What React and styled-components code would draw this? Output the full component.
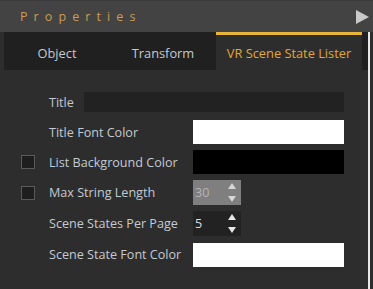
import React from "react";
import styled, { createGlobalStyle } from "styled-components";

const Global = createGlobalStyle`
  html, body { margin: 0; padding: 0; background: #2d2d2d; overflow: hidden; }
  body { font-family: "Open Sans", "Noto Sans", sans-serif; }
  #root { width: 373px; height: 289px; }
`;

const Frame = styled.div`
  width: 373px;
  height: 289px;
  display: flex;
  flex-direction: column;
  background: #2d2d2d;
`;

const Header = styled.div`
  height: 32px;
  flex: none;
  box-sizing: border-box;
  background: #434343;
  border-top: 1px solid #3a3a3a;
  display: flex;
  align-items: center;
  justify-content: space-between;
  padding: 0 4px 0 20px;
`;

const HeaderTitle = styled.div`
  color: #c99d55;
  font-size: 12.5px;
  letter-spacing: 6.1px;
  line-height: 1;
  margin-top: 2px;
`;

const PlayIcon = styled.svg`
  width: 13px;
  height: 14px;
  display: block;
`;

const Body = styled.div`
  flex: 1;
  display: flex;
`;

const Main = styled.div`
  width: 368px;
  display: flex;
  flex-direction: column;
`;

const ScrollEdge = styled.div`
  width: 2px;
  background: #e8e8e8;
`;

const TabBar = styled.div`
  height: 38px;
  margin-left: 4px;
  background: #202020;
  display: flex;
`;

const Tab = styled.div`
  box-sizing: border-box;
  width: ${(p) => p.$w}px;
  display: flex;
  align-items: center;
  justify-content: center;
  font-size: 12.8px;
  color: ${(p) => (p.$active ? "#e2a82e" : "#c3cad2")};
  background: ${(p) => (p.$active ? "#2d2d2d" : "transparent")};
  border-top: 3px solid ${(p) => (p.$active ? "#e6b53a" : "transparent")};
  padding-top: 1px;
`;

const Content = styled.div`
  padding-top: 17px;
  display: flex;
  flex-direction: column;
`;

const Row = styled.div`
  height: ${(p) => p.$h}px;
  display: flex;
  align-items: center;
  padding-left: 21px;
`;

const CheckSlot = styled.div`
  width: 14px;
  height: 14px;
  margin-right: 14px;
  box-sizing: border-box;
  background: ${(p) => (p.$show ? "#1e1e1e" : "transparent")};
  border: 1px solid ${(p) => (p.$show ? "#5a5a5a" : "transparent")};
`;

const Label = styled.div`
  width: ${(p) => p.$w || 144}px;
  flex: none;
  font-size: 12.6px;
  color: #c3cad2;
  white-space: nowrap;
`;

const TextInput = styled.div`
  width: 260px;
  height: 20px;
  background: #222222;
`;

const ColorBox = styled.div`
  width: 151px;
  height: 24px;
  background: ${(p) => p.$color};
`;

const Spinner = styled.div`
  width: 48px;
  height: 25px;
  box-sizing: border-box;
  background: ${(p) => (p.$disabled ? "#7f7f7f" : "#222222")};
  display: flex;
  align-items: center;
  justify-content: space-between;
  padding: 0 5px 0 2px;
`;

const SpinValue = styled.span`
  font-size: 12.6px;
  color: ${(p) => (p.$disabled ? "#b4b4b4" : "#d8dde2")};
`;

const Arrows = styled.div`
  display: flex;
  flex-direction: column;
  gap: 7px;
`;

const Arrow = styled.svg`
  width: 8px;
  height: 6px;
  display: block;
`;

function SpinArrows({ color }) {
  return (
    <Arrows>
      <Arrow viewBox="0 0 8 6">
        <polygon points="4,0 8,6 0,6" fill={color} />
      </Arrow>
      <Arrow viewBox="0 0 8 6">
        <polygon points="0,0 8,0 4,6" fill={color} />
      </Arrow>
    </Arrows>
  );
}

export default function App() {
  return (
    <Frame>
      <Global />
      <Header>
        <HeaderTitle>Properties</HeaderTitle>
        <PlayIcon viewBox="0 0 13 14">
          <polygon points="0,0 13,7 0,14" fill="#c9c9c9" />
        </PlayIcon>
      </Header>
      <Body>
        <Main>
          <TabBar>
            <Tab $w={106}>Object</Tab>
            <Tab $w={106}>Transform</Tab>
            <Tab $w={146} $active>
              VR Scene State Lister
            </Tab>
          </TabBar>
          <Content>
            <Row $h={30}>
              <CheckSlot />
              <Label $w={35}>Title</Label>
              <TextInput />
            </Row>
            <Row $h={30}>
              <CheckSlot />
              <Label>Title Font Color</Label>
              <ColorBox $color="#ffffff" />
            </Row>
            <Row $h={30}>
              <CheckSlot $show />
              <Label>List Background Color</Label>
              <ColorBox $color="#000000" />
            </Row>
            <Row $h={31}>
              <CheckSlot $show />
              <Label>Max String Length</Label>
              <Spinner $disabled>
                <SpinValue $disabled>30</SpinValue>
                <SpinArrows color="#d6d6d6" />
              </Spinner>
            </Row>
            <Row $h={31}>
              <CheckSlot />
              <Label>Scene States Per Page</Label>
              <Spinner>
                <SpinValue>5</SpinValue>
                <SpinArrows color="#e6e6e6" />
              </Spinner>
            </Row>
            <Row $h={31}>
              <CheckSlot />
              <Label>Scene State Font Color</Label>
              <ColorBox $color="#ffffff" />
            </Row>
          </Content>
        </Main>
        <ScrollEdge />
      </Body>
    </Frame>
  );
}
